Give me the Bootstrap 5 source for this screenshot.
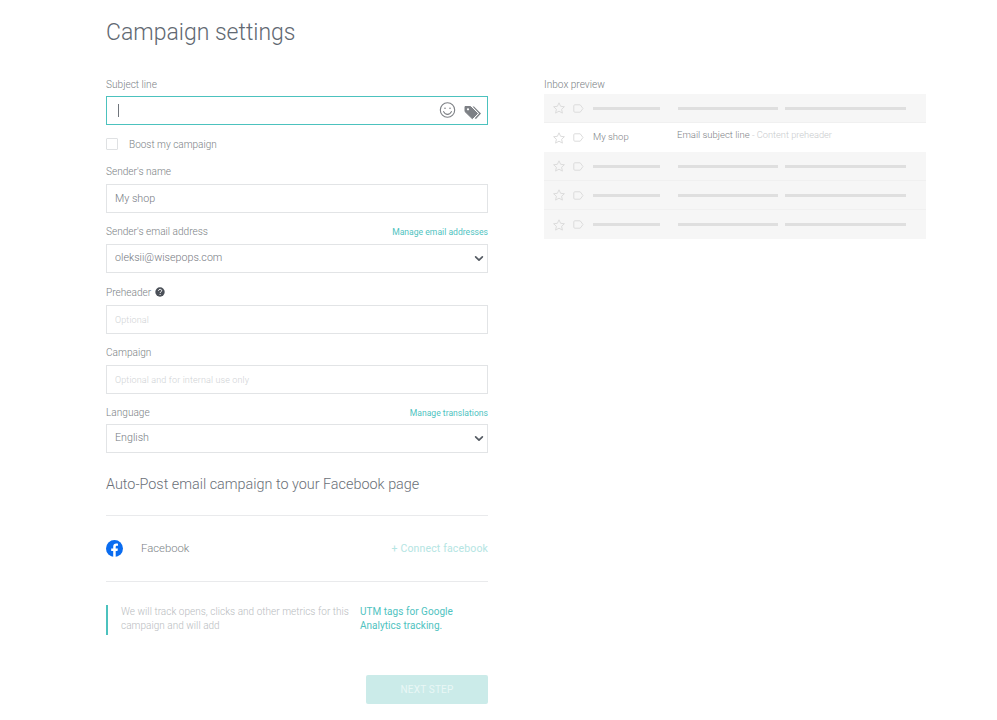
<!DOCTYPE html>
<html lang="en">
<head>
<meta charset="utf-8">
<title>Campaign settings</title>
<link rel="stylesheet" href="https://cdn.jsdelivr.net/npm/bootstrap@5.3.0/dist/css/bootstrap.min.css">
<style>
body{font-family:Roboto,"Liberation Sans",sans-serif;font-weight:300;color:#6c7078;background:#fff;font-size:11px;overflow:hidden}
.page-wrap{padding:18px 0 0 106px;width:997px}
.page-title{font-size:23px;line-height:30px;font-weight:300;color:#626972;margin:0 0 29px}
.col-side{width:382px;flex:none}
.field-group{margin-bottom:11px}
.field-group-wide{margin-bottom:12px}
.field-label{font-size:10.1px;line-height:16px;margin:0 0 4px;color:#7b7f85;height:16px}
.label-tight{margin-bottom:3px}
.label-flush{margin-bottom:1px}
.manage-link{font-size:8.6px;font-weight:400;color:#4fc3bf;text-decoration:none}
.form-control.field-input,.form-select.field-input{height:29px;min-height:29px;border-radius:0;border:1px solid #e2e4e6;font-size:10.7px;font-weight:300;color:#75797f;padding:0 8px;box-shadow:none}
.form-select.field-input{background-position:right 3px center;background-size:10px 9px;background-image:url("data:image/svg+xml,%3csvg xmlns='http://www.w3.org/2000/svg' viewBox='0 0 16 16'%3e%3cpath fill='none' stroke='%23555b63' stroke-linecap='round' stroke-linejoin='round' stroke-width='3' d='m2 5 6 6 6-6'/%3e%3c/svg%3e")}
.field-input::placeholder{color:#cfd2d5;font-size:9px;letter-spacing:.14px}
.subject-box{height:29px;border:1px solid #4cc2be;padding:0 5px 0 11px;margin-bottom:13px}
.caret-mark{width:1px;height:13px;background:#70757c}
.tag-glyph{margin-top:4px}
.boost-check{margin-bottom:14px;height:12px}
.boost-check .form-check-input{width:12px;height:12px;margin:0 11px 0 0;border-radius:1px;border-color:#dfe1e3;float:none}
.boost-check label{font-size:10px;color:#7b7f85}
.help-icon{vertical-align:-1px;margin-left:1px}
.social-heading{font-size:14.4px;line-height:20px;font-weight:300;color:#6a6f77;margin:22px 0 20px}
.fb-row{border-top:1px solid #e9eaec;border-bottom:1px solid #e9eaec;height:67px}
.fb-name{font-size:11.3px;color:#7b7f85;margin-left:18px;padding-top:2px}
.fb-connect{font-size:10.5px;font-weight:400;color:#b5e5e3;text-decoration:none;letter-spacing:.15px}
.utm-note{border-left:2px solid #4cc2be;margin-top:23px;padding-left:13px;height:30px;line-height:14px;font-size:10px;letter-spacing:.03px}
.utm-text{width:239px;color:#b9bcc0}
.utm-link{color:#4fc3bf;font-weight:400;text-decoration:none;width:110px}
.next-btn{width:122px;height:29px;margin-top:40px;background:#cbebe9;border:none;border-radius:2px;color:#e9f7f6;font-size:10px;font-weight:400;letter-spacing:.2px;padding:0}
.next-btn:disabled{background:#cbebe9;color:#e9f7f6;opacity:1}
.preview-col{margin-left:56px;padding-top:59px}
.inbox-row{height:29px;background:#f6f6f6;border-bottom:1px solid #f0f0f0;padding-left:9px}
.inbox-row.is-live{background:#fff;border-bottom:none}
.inbox-row:last-child{border-bottom:none}
.skeleton-bar{height:3px;background:#dfdfdf}
.bar-a{width:67px;margin-left:9px}
.bar-b{width:100px;margin-left:18px}
.bar-c{width:121px;margin-left:7px}
.row-sender{width:67px;margin-left:9px;font-size:9.5px;color:#7d8186}
.row-subject{margin-left:17px;font-size:9.5px;color:#7d8186;margin-top:-4px}
.row-subject span{color:#c8cacc;font-size:9.25px}
.mini-icon{margin-right:8px;flex:none}
</style>
</head>
<body>
<div class="page-wrap d-flex">
  <main class="col-side">
    <h1 class="page-title text-nowrap">Campaign settings</h1>
    <div class="field-label label-tight">Subject line</div>
    <div class="subject-box d-flex align-items-center">
      <span class="caret-mark"></span>
      <svg class="ms-auto" width="17" height="17" viewBox="0 0 17 17" fill="none" stroke="#7d8085" stroke-width="1.1"><circle cx="8.5" cy="8" r="7.2"/><circle cx="6" cy="6.3" r=".8" fill="#7d8085" stroke="none"/><circle cx="11" cy="6.3" r=".8" fill="#7d8085" stroke="none"/><path d="M4.6 9.600c.8 1.900 2.200 2.800 3.900 2.800s3.100-.9 3.900-2.800" stroke-linecap="round"/></svg>
      <svg class="ms-2 tag-glyph" width="18" height="15" viewBox="0 0 18 15" fill="#7d8085"><path d="M1 1.500h5.500l7 7-5.200 5.200-7.300-7.100z" stroke="#7d8085" stroke-linejoin="round"/><path d="M8.500 1.500h1.500l7 7-5 5.500-1.300-.8 4.400-4.700z"/><circle cx="4" cy="4.300" r="1.100" fill="#fff"/></svg>
    </div>
    <div class="boost-check d-flex align-items-center">
      <input class="form-check-input" type="checkbox" id="boost">
      <label for="boost">Boost my campaign</label>
    </div>
    <div class="field-group">
      <div class="field-label">Sender's name</div>
      <input class="form-control field-input" type="text" value="My shop">
    </div>
    <div class="field-group-wide">
      <div class="field-label d-flex justify-content-between align-items-center">Sender's email address <a class="manage-link" href="#">Manage email addresses</a></div>
      <select class="form-select field-input"><option>oleksii@wisepops.com</option></select>
    </div>
    <div class="field-group">
      <div class="field-label">Preheader <svg class="help-icon" width="10" height="10" viewBox="0 0 10 10"><circle cx="5" cy="5" r="4.700" fill="#4b5058"/><path d="M3.500 3.900c0-2 3.200-2 3.200-.2 0 1.100-1.600 1.100-1.600 2.300" fill="none" stroke="#fff" stroke-width="1"/><circle cx="5.100" cy="7.500" r=".6" fill="#fff"/></svg></div>
      <input class="form-control field-input" type="text" placeholder="Optional">
    </div>
    <div class="field-group">
      <div class="field-label">Campaign</div>
      <input class="form-control field-input" type="text" placeholder="Optional and for internal use only">
    </div>
    <div class="field-group-wide">
      <div class="field-label label-tight d-flex justify-content-between align-items-center">Language <a class="manage-link" href="#">Manage translations</a></div>
      <select class="form-select field-input"><option>English</option></select>
    </div>
    <h2 class="social-heading text-nowrap">Auto-Post email campaign to your Facebook page</h2>
    <div class="fb-row d-flex align-items-center">
      <svg width="17" height="17" viewBox="0 0 17 17"><circle cx="8.500" cy="8.500" r="8.500" fill="#0a6cf0"/><path d="M7.200 17V11H5.200V8.500h2V6.700c0-2.100 1.200-3.200 3.100-3.200.9 0 1.700.15 1.700.15v2.100h-1c-1 0-1.300.6-1.300 1.300v1.450h2.200L11.500 11H9.700v6z" fill="#fff"/></svg>
      <span class="fb-name">Facebook</span>
      <a class="fb-connect ms-auto" href="#">+ Connect facebook</a>
    </div>
    <div class="utm-note d-flex">
      <div class="utm-text">We will track opens, clicks and other metrics for this campaign and will add</div>
      <a class="utm-link" href="#">UTM tags for Google Analytics tracking.</a>
    </div>
    <div class="d-flex justify-content-end">
      <button class="btn next-btn" type="button" disabled>NEXT STEP</button>
    </div>
  </main>
  <aside class="col-side preview-col">
    <div class="field-label label-flush">Inbox preview</div>
    <div class="inbox-list">
      <div class="inbox-row d-flex align-items-center">
        <svg class="mini-icon" width="12" height="12" viewBox="0 0 12 12" fill="none" stroke="#dcdcdc"><path d="m6 .8 1.600 3.500 3.800.4-2.800 2.600.8 3.800L6 9.200l-3.400 1.900.8-3.800L.6 4.700l3.800-.4z"/></svg>
        <svg width="11" height="9" viewBox="0 0 11 9" fill="none" stroke="#dcdcdc"><path d="M1.800.8h5.400l2.800 3.700-2.800 3.700H1.800a1 1 0 0 1-1-1V1.800a1 1 0 0 1 1-1z" stroke-linejoin="round"/></svg>
        <div class="skeleton-bar bar-a"></div><div class="skeleton-bar bar-b"></div><div class="skeleton-bar bar-c"></div>
      </div>
      <div class="inbox-row is-live d-flex align-items-center">
        <svg class="mini-icon" width="12" height="12" viewBox="0 0 12 12" fill="none" stroke="#dcdcdc"><path d="m6 .8 1.600 3.500 3.800.4-2.800 2.600.8 3.800L6 9.200l-3.400 1.900.8-3.800L.6 4.700l3.800-.4z"/></svg>
        <svg width="11" height="9" viewBox="0 0 11 9" fill="none" stroke="#dcdcdc"><path d="M1.800.8h5.400l2.800 3.700-2.800 3.700H1.800a1 1 0 0 1-1-1V1.800a1 1 0 0 1 1-1z" stroke-linejoin="round"/></svg>
        <div class="row-sender">My shop</div>
        <div class="row-subject">Email subject line <span>- Content preheader</span></div>
      </div>
      <div class="inbox-row d-flex align-items-center">
        <svg class="mini-icon" width="12" height="12" viewBox="0 0 12 12" fill="none" stroke="#dcdcdc"><path d="m6 .8 1.600 3.500 3.800.4-2.800 2.600.8 3.800L6 9.200l-3.400 1.900.8-3.800L.6 4.700l3.800-.4z"/></svg>
        <svg width="11" height="9" viewBox="0 0 11 9" fill="none" stroke="#dcdcdc"><path d="M1.800.8h5.400l2.800 3.700-2.800 3.700H1.800a1 1 0 0 1-1-1V1.800a1 1 0 0 1 1-1z" stroke-linejoin="round"/></svg>
        <div class="skeleton-bar bar-a"></div><div class="skeleton-bar bar-b"></div><div class="skeleton-bar bar-c"></div>
      </div>
      <div class="inbox-row d-flex align-items-center">
        <svg class="mini-icon" width="12" height="12" viewBox="0 0 12 12" fill="none" stroke="#dcdcdc"><path d="m6 .8 1.600 3.500 3.800.4-2.800 2.600.8 3.800L6 9.200l-3.400 1.900.8-3.800L.6 4.700l3.800-.4z"/></svg>
        <svg width="11" height="9" viewBox="0 0 11 9" fill="none" stroke="#dcdcdc"><path d="M1.800.8h5.400l2.800 3.700-2.800 3.700H1.800a1 1 0 0 1-1-1V1.800a1 1 0 0 1 1-1z" stroke-linejoin="round"/></svg>
        <div class="skeleton-bar bar-a"></div><div class="skeleton-bar bar-b"></div><div class="skeleton-bar bar-c"></div>
      </div>
      <div class="inbox-row d-flex align-items-center">
        <svg class="mini-icon" width="12" height="12" viewBox="0 0 12 12" fill="none" stroke="#dcdcdc"><path d="m6 .8 1.600 3.500 3.800.4-2.800 2.600.8 3.800L6 9.200l-3.400 1.900.8-3.800L.6 4.700l3.800-.4z"/></svg>
        <svg width="11" height="9" viewBox="0 0 11 9" fill="none" stroke="#dcdcdc"><path d="M1.800.8h5.400l2.800 3.700-2.800 3.700H1.800a1 1 0 0 1-1-1V1.800a1 1 0 0 1 1-1z" stroke-linejoin="round"/></svg>
        <div class="skeleton-bar bar-a"></div><div class="skeleton-bar bar-b"></div><div class="skeleton-bar bar-c"></div>
      </div>
    </div>
  </aside>
</div>
<script src="https://cdn.jsdelivr.net/npm/bootstrap@5.3.0/dist/js/bootstrap.bundle.min.js"></script>
</body>
</html>
